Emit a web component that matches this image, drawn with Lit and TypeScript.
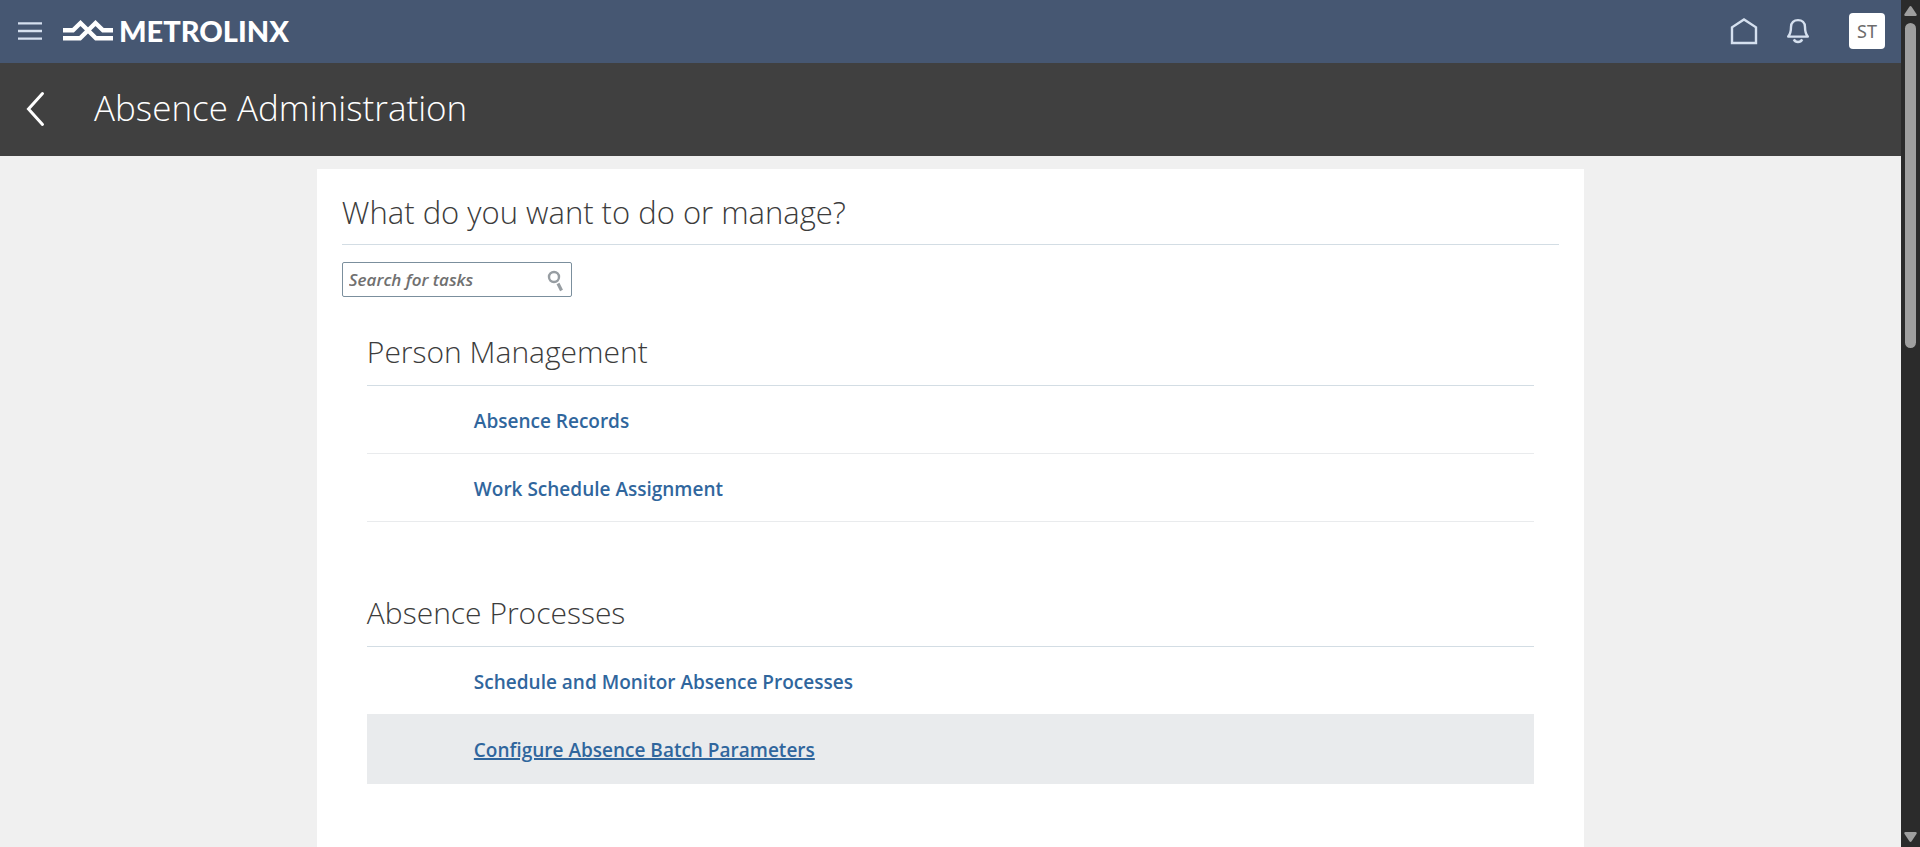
import { LitElement, html, css } from "lit";
import { customElement, property } from "lit/decorators.js";
import { classMap } from "lit/directives/class-map.js";

interface Task {
  label: string;
  active?: boolean;
}

interface TaskGroup {
  title: string;
  tasks: Task[];
}

const GROUPS: TaskGroup[] = [
  {
    title: "Person Management",
    tasks: [{ label: "Absence Records" }, { label: "Work Schedule Assignment" }],
  },
  {
    title: "Absence Processes",
    tasks: [
      { label: "Schedule and Monitor Absence Processes" },
      { label: "Configure Absence Batch Parameters", active: true },
    ],
  },
];

@customElement("global-header")
class GlobalHeader extends LitElement {
  static styles = css`
    :host {
      display: flex;
      align-items: center;
      box-sizing: border-box;
      height: 63px;
      padding: 0 16px 2px;
      background: #465772;
      color: #fff;
    }
    svg {
      display: block;
      fill: none;
    }
    button {
      padding: 0;
      border: 0;
      background: none;
      color: #d5e0ef;
      cursor: pointer;
    }
    .menu {
      padding: 0 2px;
    }
    .brand {
      display: flex;
      align-items: center;
      gap: 5px;
      margin-left: 18px;
      color: #fff;
      text-decoration: none;
      font: 900 29px/32px Lato, sans-serif;
    }
    .tools {
      display: flex;
      align-items: center;
      margin-left: auto;
      gap: 28px;
    }
    .avatar {
      width: 36px;
      height: 36px;
      margin-left: 11px;
      border-radius: 4px;
      background: #fff;
      color: #6c6c6c;
      font: 18px/36px "Noto Sans", sans-serif;
    }
  `;

  render() {
    return html`
      <button class="menu" aria-label="Navigator">
        <svg width="24" height="20" stroke="currentColor" stroke-width="2.4">
          <path d="M0 2.4H24M0 10H24M0 17.6H24" />
        </svg>
      </button>
      <a class="brand" href="#">
        <svg width="52" height="23" stroke="currentColor" stroke-width="4.4" aria-hidden="true">
          <path d="M1 11.3H11L18.5 4L34 19.2H51M51 11.3H41L33.5 4L18 19.2H1" />
        </svg>
        METROLINX
      </a>
      <div class="tools">
        <button aria-label="Home">
          <svg width="28" height="28" stroke="currentColor" stroke-width="2.4">
            <path d="M2 26V10.3L14 2.4L26 10.3V26Z" />
          </svg>
        </button>
        <button aria-label="Notifications">
          <svg width="24" height="26" stroke="currentColor" stroke-width="2.4" stroke-linejoin="round">
            <path d="M2.2 18.6C4.4 16 5 13.8 5 9C5 4.6 8 2.1 12 2.1S19 4.6 19 9C19 13.8 19.6 16 21.8 18.6Z" />
            <path d="M7.8 21.4C8.6 23 10.2 24 12 24S15.4 23 16.2 21.4" />
          </svg>
        </button>
        <button class="avatar" aria-label="Settings and actions">ST</button>
      </div>
    `;
  }
}

@customElement("task-group")
class TaskGroupElement extends LitElement {
  @property({ attribute: false }) group!: TaskGroup;

  static styles = css`
    :host {
      display: block;
      margin: 0 25px;
    }
    h2 {
      margin: 0;
      padding-bottom: 13px;
      border-bottom: 1px solid #d3dde4;
      color: #3c3c3c;
      font-size: 30px;
      line-height: 40px;
      font-weight: 300;
    }
    ul {
      margin: 0;
      padding: 0;
      list-style: none;
    }
    .row {
      display: flex;
      align-items: center;
      box-sizing: border-box;
      height: 68px;
      padding: 2px 0 0 107px;
      border-bottom: 1px solid #e9ebed;
    }
    .row.active {
      background: #e9ebed;
      box-shadow: 0 1px #e9ebed, 0 -1px #e9ebed;
    }
    a {
      color: #30669d;
      font-size: 19px;
      line-height: 26px;
      font-weight: 600;
      text-decoration: none;
    }
    .active a {
      text-decoration: underline;
      text-decoration-thickness: 2px;
    }
  `;

  render() {
    return html`
      <h2>${this.group.title}</h2>
      <ul>
        ${this.group.tasks.map(
          (t) => html`<li class=${classMap({ row: true, active: !!t.active })}><a href="#">${t.label}</a></li>`
        )}
      </ul>
    `;
  }
}

@customElement("app-root")
class AppRoot extends LitElement {
  static styles = css`
    :host {
      display: flex;
      height: 100vh;
      overflow: hidden;
      background: #f0f0f0;
      font-family: "Open Sans", sans-serif;
    }
    .page {
      display: flex;
      flex-direction: column;
      flex: 1;
      min-width: 0;
    }
    .titlebar {
      display: flex;
      flex: none;
      align-items: center;
      box-sizing: border-box;
      height: 93px;
      padding-bottom: 2px;
      background: #404040;
      color: #fff;
    }
    .back {
      display: block;
      margin: 0 48px 0 24px;
      padding: 0;
      border: 0;
      background: none;
      color: inherit;
      cursor: pointer;
    }
    svg {
      display: block;
      fill: none;
    }
    h1 {
      margin: 0;
      padding-bottom: 2px;
      font-size: 35px;
      line-height: 44px;
      font-weight: 300;
    }
    .card {
      flex: 1;
      box-sizing: border-box;
      width: 66.667%;
      margin: 13px auto 0;
      padding: 23px 25px 0;
      background: #fff;
    }
    .question {
      margin: 0 0 17px;
      padding-bottom: 12px;
      border-bottom: 1px solid #d3dde4;
      color: #3c3c3c;
      font-size: 31px;
      line-height: 40px;
      font-weight: 300;
    }
    .search {
      display: flex;
      align-items: center;
      box-sizing: border-box;
      width: 230px;
      height: 35px;
      border: 1px solid #7b8f9d;
      border-radius: 2px;
    }
    input {
      flex: 1;
      min-width: 0;
      padding: 0 0 0 6px;
      border: 0;
      outline: 0;
      background: none;
      font: italic 600 17px/24px "Open Sans", sans-serif;
    }
    input::placeholder {
      color: #707070;
      opacity: 1;
    }
    .go {
      padding: 2px 6px 0 8px;
      border: 0;
      background: none;
      color: #979da2;
      cursor: pointer;
    }
    .groups {
      display: flex;
      flex-direction: column;
      gap: 71px;
      padding-top: 35px;
    }
    .scrollbar {
      display: flex;
      flex-direction: column;
      align-items: center;
      flex: none;
      box-sizing: border-box;
      width: 19px;
      padding: 6px 0 5px;
      background: #2b2b2b;
      color: #9f9f9f;
    }
    .scrollbar svg {
      flex: none;
      fill: currentColor;
    }
    .track {
      flex: 1;
      width: 11px;
      margin: 7px 0 10px;
    }
    .thumb {
      height: 40.7%;
      border-radius: 6px;
      background: #9f9f9f;
    }
  `;

  render() {
    return html`
      <div class="page">
        <global-header></global-header>
        <header class="titlebar">
          <button class="back" aria-label="Back">
            <svg width="22" height="36" stroke="currentColor" stroke-width="3" stroke-linecap="round">
              <path d="M18.5 2.5L4.5 18L18.5 33.5" />
            </svg>
          </button>
          <h1>Absence Administration</h1>
        </header>
        <main class="card">
          <h2 class="question">What do you want to do or manage?</h2>
          <div class="search">
            <input type="text" placeholder="Search for tasks" aria-label="Search for tasks" />
            <button class="go" aria-label="Search">
              <svg width="18" height="22" stroke="currentColor">
                <circle cx="7" cy="7" r="5" stroke-width="2.4" />
                <path d="M11 13.5L14.5 20.5" stroke-width="3.2" />
              </svg>
            </button>
          </div>
          <div class="groups">
            ${GROUPS.map((g) => html`<task-group .group=${g}></task-group>`)}
          </div>
        </main>
      </div>
      <div class="scrollbar" aria-hidden="true">
        <svg width="13" height="10"><path d="M5.4 .8Q6.5 -.6 7.6 .8L12.6 8.2Q13 10 11.6 10H1.4Q0 10 .4 8.2Z" /></svg>
        <div class="track"><div class="thumb"></div></div>
        <svg width="13" height="10"><path d="M5.4 9.2Q6.5 10.6 7.6 9.2L12.6 1.8Q13 0 11.6 0H1.4Q0 0 .4 1.8Z" /></svg>
      </div>
    `;
  }
}
